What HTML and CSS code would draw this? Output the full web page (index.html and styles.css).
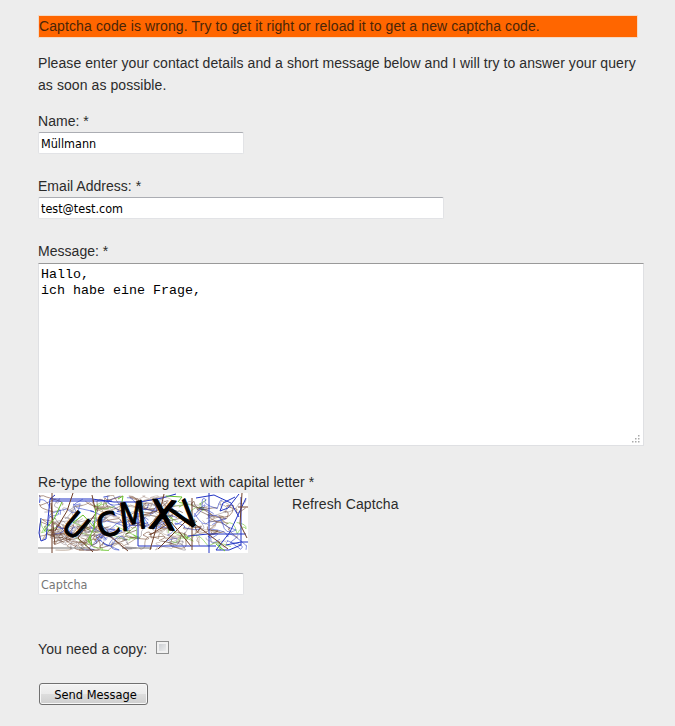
FILE: index.html
```html
<!DOCTYPE html>
<html lang="en">
<head>
<meta charset="utf-8">
<title>Contact</title>
<link rel="stylesheet" href="styles.css">
</head>
<body>
<form class="contact">
  <div class="alert">Captcha code is wrong. Try to get it right or reload it to get a new captcha code.</div>
  <p class="intro">Please enter your contact details and a short message below and I will try to answer your query<br>as soon as possible.</p>
  <div class="field">
    <label for="name">Name: *</label>
    <input class="text" id="name" type="text" value="Müllmann">
  </div>
  <div class="field">
    <label for="email">Email Address: *</label>
    <input class="text wide" id="email" type="text" value="test@test.com">
  </div>
  <div class="field message">
    <label for="message">Message: *</label>
    <div class="area">
      <textarea id="message" spellcheck="false">Hallo,
ich habe eine Frage,</textarea>
      <svg class="grip" width="8" height="8" viewBox="0 0 8 8" fill="#aaa"><path d="M6 0h1.500v1.500H6zM3 3h1.500v1.500H3zM6 3h1.500v1.500H6zM0 6h1.500v1.500H0zM3 6h1.500v1.500H3zM6 6h1.500v1.500H6z"/></svg>
    </div>
  </div>
  <label class="captcha-label" for="captcha">Re-type the following text with capital letter *</label>
  <div class="captcha-row">
    <svg class="captcha" width="210" height="60" viewBox="0 0 210 60" fill="none">
      <g id="noise" stroke-width="0.8"></g>
      <g stroke-width="1">
        <path stroke="#777" d="M0 55h52M84 55h30"/>
        <path stroke="#2335c4" d="M12 6h42l22 3h26l22-4 14-4M14 8h60M3 25l-2 15 2 8 5-2 4-40 5-4M100 20v33h78M150 43l20-2h38M171 0v60M203 4v48l-12 5h-13l14-18 16-34M158 5l18-3 17 8 8 14M197 4l-12 6-3 8 8-3 11-14M188 52l15-3h7"/>
        <path stroke="#70402a" d="M14 0v60M13 10l4 42M35 0l-6 18-12 20M54 2l4 18-18 25 15 14M126 1l-8 35-6 21M154 5v52M200 14h10M204 0l-2 31 7 14M112 42l21-13 20 24M60 33l30 25M120 56l30-30 40 30"/>
        <path stroke="#68c32b" d="M24 9l-8 17-10 12M52 43l2 9-4-5 6-12 2-20M80 6l5-3-1 6M178 51l9 7M128 3l16 1-4 5M35 30l10-8 12 13"/>
      </g>
      <g class="glyphs">
        <text font-size="34" transform="translate(22 35) rotate(40) scale(.84 1)">U</text>
        <text font-size="33" transform="translate(63 46) rotate(-18) scale(.95 1)">C</text>
        <text font-size="38" transform="translate(83 38) rotate(-7) scale(.82 1)">M</text>
        <text class="heavy" font-size="40" transform="translate(110 35) rotate(5)">X</text>
        <text class="heavy" font-size="37" transform="translate(148 39) rotate(-38) scale(.78 1)">V</text>
      </g>
    </svg>
    <a class="refresh">Refresh Captcha</a>
  </div>
  <input class="text code" id="captcha" type="text" placeholder="Captcha">
  <div class="copy">
    <label for="copy">You need a copy:</label>
    <input class="check" id="copy" type="checkbox">
  </div>
  <button class="send" type="button">Send Message</button>
</form>
<script src="noise.js"></script>
</body>
</html>
```
FILE: styles.css
```css
* { box-sizing: border-box; }
body {
  margin: 0;
  background: #ededed;
  color: #2b2b2b;
  font: 14px/22px "Liberation Sans", Arial, sans-serif;
  letter-spacing: 0.1px;
}
.contact { display: flex; flex-direction: column; align-items: flex-start; padding: 15px 0 0 38px; }
.alert {
  width: 600px;
  height: 23px;
  border: 1px solid #f4d9c4;
  background: #ff6600;
  color: #4a2508;
  line-height: 21px;
  letter-spacing: 0.11px;
  white-space: nowrap;
}
.intro { margin: 14px 0; letter-spacing: 0.075px; white-space: nowrap; }
label { display: block; }
.field label { letter-spacing: 0.03px; }
.captcha-label { letter-spacing: 0.03px; }
.field { display: flex; flex-direction: column; height: 65px; }
.text {
  display: block;
  width: 206px;
  height: 22px;
  margin: 0;
  padding: 1px 2px 0;
  border: 1px solid #e2e3e6;
  border-top-color: #abadb3;
  border-radius: 2px;
  background: #fff;
  color: #000;
  font: 12.5px/18px "DejaVu Sans Condensed", "DejaVu Sans", sans-serif;
}
.text.wide { width: 406px; }
.text::placeholder { color: #777; opacity: 1; }
.field.message { height: 231px; }
.area { position: relative; width: 606px; height: 183px; margin-top: 1px; }
textarea {
  display: block;
  width: 606px;
  height: 183px;
  margin: 0;
  padding: 3px 2px 2px;
  border: 1px solid #dfe0e3;
  border-top-color: #999;
  background: #fff;
  color: #000;
  resize: none;
  overflow: hidden;
  font: 13.333px/16px "Liberation Mono", "Courier New", monospace;
}
.grip { position: absolute; right: 4px; bottom: 3px; }
.captcha-row { display: flex; gap: 44px; height: 60px; }
.captcha { background: #fff; overflow: visible; }
.glyphs {
  fill: #000;
  stroke: #000;
  stroke-width: 1.1;
  stroke-linejoin: round;
  font-family: "DejaVu Sans", sans-serif;
  letter-spacing: 0;
}
.glyphs .heavy { stroke-width: 1.5; }
.refresh { color: inherit; }
.code { margin-top: 20px; }
.copy { display: flex; align-items: flex-start; gap: 9px; margin-top: 43px; height: 22px; }
.check {
  appearance: none;
  width: 13px;
  height: 13px;
  margin: 3px 0 0;
  border: 1px solid #8e8f8f;
  background: linear-gradient(135deg, #c3c7cc, #f4f4f4);
  box-shadow: inset 0 0 0 2px #f1f1f1;
}
.send {
  width: 109px;
  height: 22px;
  margin: 23px 0 0 1px;
  padding: 1px 0 0 4px;
  border: 1px solid #707070;
  border-radius: 3px;
  background: linear-gradient(#f2f2f2 0%, #ebebeb 48%, #dddddd 52%, #cfcfcf 100%);
  box-shadow: inset 0 0 0 1px #f8f8f8;
  color: #000;
  font: 12.7px/19px "DejaVu Sans Condensed", "DejaVu Sans", sans-serif;
  white-space: nowrap;
}
```
FILE: noise.js
```js
// Fills the captcha background with a repeatable tangle of thin curves.
const noise = document.getElementById('noise');
let seed = 73;
const rand = () => (seed = (seed * 16807) % 2147483647) / 2147483647;
const colors = ['#70402a', '#2335c4', '#8b6a50', '#88828c', '#2335c4', '#55301c', '#9c8f95', '#68c32b', '#b09a90', '#70402a'];
for (let i = 0; i < 145; i++) {
  let x = 8 + rand() * 182;
  let y = 8 + rand() * 42;
  let d = `M${x.toFixed(1)} ${y.toFixed(1)}`;
  for (let k = 0; k < 3; k++) {
    const cx = x + (rand() - 0.5) * 34, cy = Math.min(58, Math.max(2, y + (rand() - 0.5) * 22));
    x = Math.min(208, Math.max(2, x + (rand() - 0.5) * 36));
    y = Math.min(57, Math.max(3, y + (rand() - 0.5) * 20));
    d += `Q${Math.min(209, Math.max(1, cx)).toFixed(1)} ${cy.toFixed(1)} ${x.toFixed(1)} ${y.toFixed(1)}`;
  }
  const path = document.createElementNS('http://www.w3.org/2000/svg', 'path');
  path.setAttribute('d', d);
  path.setAttribute('stroke', colors[i % colors.length]);
  path.setAttribute('stroke-opacity', '0.7');
  noise.appendChild(path);
}
```
